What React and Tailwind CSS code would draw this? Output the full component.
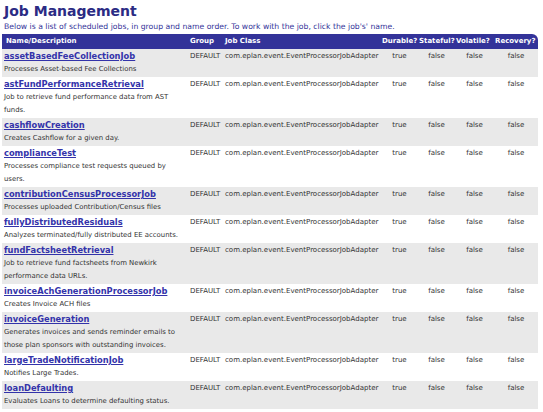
const JOBS = [
  { name: "assetBasedFeeCollectionJob", desc: "Processes Asset-based Fee Collections" },
  { name: "astFundPerformanceRetrieval", desc: "Job to retrieve fund performance data from AST funds." },
  { name: "cashflowCreation", desc: "Creates Cashflow for a given day." },
  { name: "complianceTest", desc: "Processes compliance test requests queued by users." },
  { name: "contributionCensusProcessorJob", desc: "Processes uploaded Contribution/Census files" },
  { name: "fullyDistributedResiduals", desc: "Analyzes terminated/fully distributed EE accounts." },
  { name: "fundFactsheetRetrieval", desc: "Job to retrieve fund factsheets from Newkirk performance data URLs." },
  { name: "invoiceAchGenerationProcessorJob", desc: "Creates Invoice ACH files" },
  { name: "invoiceGeneration", desc: "Generates invoices and sends reminder emails to those plan sponsors with outstanding invoices." },
  { name: "largeTradeNotificationJob", desc: "Notifies Large Trades." },
  { name: "loanDefaulting", desc: "Evaluates Loans to determine defaulting status." },
];

export default function App() {
  return (
    <div className="min-h-[412px] bg-white text-[#333] font-['DejaVu_Sans',Verdana,sans-serif] overflow-hidden">
      <h1 className="pl-[4px] pt-[3px] text-[14px] leading-[16px] font-bold text-[#2b2b84]">Job Management</h1>
      <p className="pl-[4px] mt-[3px] text-[7.7px] leading-[10px] text-[#333399]">
        Below is a list of scheduled jobs, in group and name order. To work with the job, click the job's' name.
      </p>
      <table className="mt-[2px] ml-[2px] w-[536px] table-fixed border-collapse">
        <colgroup>
          <col className="w-[186px]" />
          <col className="w-[35px]" />
          <col className="w-[158px]" />
          <col className="w-[37px]" />
          <col className="w-[37px]" />
          <col className="w-[39px]" />
          <col className="w-[44px]" />
        </colgroup>
        <thead>
          <tr className="bg-[#333399] text-white text-[7px] leading-[15px] font-bold text-left whitespace-nowrap">
            <th className="pl-[4px]">Name/Description</th>
            <th className="pl-[2px]">Group</th>
            <th className="pl-[2px]">Job Class</th>
            <th className="pl-[1px]">Durable?</th>
            <th className="pl-[1px]">Stateful?</th>
            <th className="pl-[1px]">Volatile?</th>
            <th className="pl-[1px] rounded-tr-[6px]">Recovery?</th>
          </tr>
        </thead>
        <tbody>
          {JOBS.map((job, i) => (
            <tr key={job.name} className={i % 2 === 0 ? "bg-[#e9e9e9]" : "bg-white"}>
              <td className="align-top pl-[2px] pt-[1px] pb-[1px]">
                <a href="#" className="block text-[8.3px] leading-[13px] font-bold text-[#3333aa] underline">
                  {job.name}
                </a>
                <div className="text-[6.9px] leading-[13px] pr-[6px]">{job.desc}</div>
              </td>
              <td className="align-top pl-[2px] pt-[1px] text-[7px] leading-[13px]">DEFAULT</td>
              <td className="align-top pl-[2px] pt-[1px] text-[7px] leading-[13px] whitespace-nowrap">
                com.eplan.event.EventProcessorJobAdapter
              </td>
              <td className="align-top pt-[1px] text-[7px] leading-[13px] text-center">true</td>
              <td className="align-top pt-[1px] text-[7px] leading-[13px] text-center">false</td>
              <td className="align-top pt-[1px] text-[7px] leading-[13px] text-center">false</td>
              <td className="align-top pt-[1px] text-[7px] leading-[13px] text-center">false</td>
            </tr>
          ))}
        </tbody>
      </table>
    </div>
  );
}
